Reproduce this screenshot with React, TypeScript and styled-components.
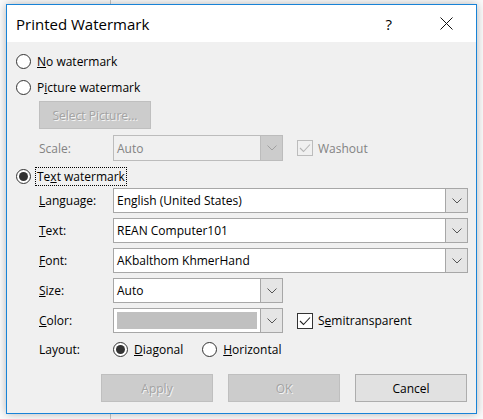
import React from "react";
import styled, { createGlobalStyle } from "styled-components";

const GlobalStyle = createGlobalStyle`
  html, body {
    margin: 0;
    padding: 0;
    background: #fbfbfb;
  }
  body {
    font-family: "Segoe UI", "Open Sans", "Noto Sans", sans-serif;
    font-size: 12px;
    color: #000;
  }
`;

const Desktop = styled.div`
  width: 483px;
  height: 419px;
  overflow: hidden;
  box-sizing: border-box;
  padding: 4px 0 0 6px;
  background:
    linear-gradient(to right, transparent 110px, #c6c6c6 110px, #c6c6c6 111px, transparent 111px),
    #fbfbfb;
`;

const Dialog = styled.div`
  width: 471px;
  height: 410px;
  box-sizing: border-box;
  border: 1px solid #1883d7;
  background: #f0f0f0;
  box-shadow: 0 0 9px rgba(0, 0, 0, 0.28);
  display: flex;
  flex-direction: column;
`;

const TitleBar = styled.div`
  height: 37px;
  flex-shrink: 0;
  background: #fff;
  display: flex;
  align-items: center;
  padding: 0 23px 0 9px;
`;

const Title = styled.div`
  font-size: 15px;
  flex: 1;
`;

const Help = styled.span`
  font-size: 15px;
  margin-right: 48px;
`;

const Body = styled.div`
  display: flex;
  flex-direction: column;
  padding: 9px 8px 0 9px;
`;

const RadioRow = styled.label<{ $top?: number }>`
  display: flex;
  align-items: center;
  height: 20px;
  gap: 6px;
  margin-top: ${(p) => p.$top ?? 0}px;
`;

const Circle = styled.span<{ $on?: boolean }>`
  width: 15px;
  height: 15px;
  box-sizing: border-box;
  border: 1px solid #333;
  border-radius: 50%;
  background: #fff;
  display: flex;
  align-items: center;
  justify-content: center;
  flex-shrink: 0;

  &::after {
    content: "";
    display: ${(p) => (p.$on ? "block" : "none")};
    width: 9px;
    height: 9px;
    border-radius: 50%;
    background: #333;
  }
`;

const Focus = styled.span`
  outline: 1px dotted #000;
  padding: 0 1px;
  margin-left: -1px;
`;

const Indent = styled.div<{ $top?: number }>`
  margin-left: 23px;
  margin-top: ${(p) => p.$top ?? 0}px;
`;

const Button = styled.div<{ $disabled?: boolean; $w?: number }>`
  width: ${(p) => p.$w ?? 112}px;
  height: 28px;
  box-sizing: border-box;
  display: flex;
  align-items: center;
  justify-content: center;
  background: ${(p) => (p.$disabled ? "#cccccc" : "#e1e1e1")};
  border: 1px solid ${(p) => (p.$disabled ? "#bfbfbf" : "#adadad")};
  color: ${(p) => (p.$disabled ? "#a3a3a3" : "#000")};
  text-shadow: ${(p) => (p.$disabled ? "1px 1px 0 #f4f4f4" : "none")};
`;

const ScaleRow = styled.div`
  display: grid;
  grid-template-columns: 74px 170px auto;
  align-items: center;
  height: 26px;
  margin-top: 6px;
  margin-left: 23px;
`;

const Form = styled.div`
  display: grid;
  grid-template-columns: 74px 1fr;
  grid-auto-rows: 25px;
  row-gap: 5px;
  align-items: center;
  margin-left: 23px;
  margin-top: 2px;
`;

const Label = styled.span<{ $disabled?: boolean }>`
  color: ${(p) => (p.$disabled ? "#838383" : "#000")};
`;

const Combo = styled.div<{ $w?: number; $disabled?: boolean }>`
  width: ${(p) => (p.$w ? `${p.$w}px` : "100%")};
  height: 100%;
  box-sizing: border-box;
  border: 1px solid ${(p) => (p.$disabled ? "#bcbcbc" : "#a7a7a7")};
  background: ${(p) => (p.$disabled ? "#f0f0f0" : "#fff")};
  color: ${(p) => (p.$disabled ? "#838383" : "#000")};
  display: flex;
  align-items: stretch;
`;

const ComboValue = styled.div`
  flex: 1;
  display: flex;
  align-items: center;
  padding-left: 3px;
  white-space: nowrap;
  overflow: hidden;
`;

const Swatch = styled.div`
  flex: 1;
  margin: 3px;
  background: #c0c0c0;
`;

const Drop = styled.div<{ $disabled?: boolean }>`
  width: 21px;
  border-left: 1px solid ${(p) => (p.$disabled ? "#bcbcbc" : "#a7a7a7")};
  background: ${(p) => (p.$disabled ? "#cccccc" : "#e5e5e5")};
  display: flex;
  align-items: center;
  justify-content: center;
`;

const CheckRow = styled.div<{ $disabled?: boolean }>`
  display: flex;
  align-items: center;
  gap: 5px;
  margin-left: 14px;
  color: ${(p) => (p.$disabled ? "#838383" : "#000")};
`;

const Box = styled.span<{ $disabled?: boolean }>`
  width: 16px;
  height: 16px;
  box-sizing: border-box;
  border: 1px solid ${(p) => (p.$disabled ? "#bcbcbc" : "#333")};
  background: ${(p) => (p.$disabled ? "#f0f0f0" : "#fff")};
  display: flex;
  align-items: center;
  justify-content: center;
`;

const ColorCell = styled.div`
  display: flex;
  align-items: center;
  height: 100%;
`;

const LayoutRow = styled.div`
  display: grid;
  grid-template-columns: 74px auto auto;
  justify-content: start;
  align-items: center;
  height: 20px;
  margin-top: 6px;
  margin-left: 23px;
`;

const LayoutOption = styled.span<{ $gap?: number }>`
  display: flex;
  align-items: center;
  gap: 6px;
  margin-right: ${(p) => p.$gap ?? 0}px;
`;

const Footer = styled.div`
  display: flex;
  justify-content: flex-end;
  gap: 15px;
  margin: 15px 1px 0 0;
`;

const Chevron = ({ color = "#555" }: { color?: string }) => (
  <svg width="10" height="6" viewBox="0 0 10 6">
    <path d="M0.5 0.5 L5 5 L9.5 0.5" fill="none" stroke={color} strokeWidth="1" />
  </svg>
);

const Tick = ({ color = "#222" }: { color?: string }) => (
  <svg width="12" height="10" viewBox="0 0 12 10">
    <path d="M1 5 L4.5 8.5 L11 1.5" fill="none" stroke={color} strokeWidth="1.1" />
  </svg>
);

const CloseIcon = () => (
  <svg width="13" height="13" viewBox="0 0 13 13">
    <path d="M0.5 0.5 L12.5 12.5 M12.5 0.5 L0.5 12.5" stroke="#111" strokeWidth="1" />
  </svg>
);

const App: React.FC = () => {
  return (
    <Desktop>
      <GlobalStyle />
      <Dialog>
        <TitleBar>
          <Title>Printed Watermark</Title>
          <Help>?</Help>
          <CloseIcon />
        </TitleBar>
        <Body>
          <RadioRow>
            <Circle />
            <span>
              <u>N</u>o watermark
            </span>
          </RadioRow>
          <RadioRow $top={6}>
            <Circle />
            <span>
              P<u>i</u>cture watermark
            </span>
          </RadioRow>
          <Indent $top={4}>
            <Button $disabled>Select Picture...</Button>
          </Indent>
          <ScaleRow>
            <Label $disabled>Scale:</Label>
            <Combo $disabled>
              <ComboValue>Auto</ComboValue>
              <Drop $disabled>
                <Chevron color="#a0a0a0" />
              </Drop>
            </Combo>
            <CheckRow $disabled>
              <Box $disabled>
                <Tick color="#b5b5b5" />
              </Box>
              <span>Washout</span>
            </CheckRow>
          </ScaleRow>
          <RadioRow $top={5}>
            <Circle $on />
            <Focus>
              Te<u>x</u>t watermark
            </Focus>
          </RadioRow>
          <Form>
            <Label>
              <u>L</u>anguage:
            </Label>
            <Combo>
              <ComboValue>English (United States)</ComboValue>
              <Drop>
                <Chevron />
              </Drop>
            </Combo>
            <Label>
              <u>T</u>ext:
            </Label>
            <Combo>
              <ComboValue>REAN Computer101</ComboValue>
              <Drop>
                <Chevron />
              </Drop>
            </Combo>
            <Label>
              <u>F</u>ont:
            </Label>
            <Combo>
              <ComboValue>AKbalthom KhmerHand</ComboValue>
              <Drop>
                <Chevron />
              </Drop>
            </Combo>
            <Label>
              <u>S</u>ize:
            </Label>
            <Combo $w={170}>
              <ComboValue>Auto</ComboValue>
              <Drop>
                <Chevron />
              </Drop>
            </Combo>
            <Label>
              <u>C</u>olor:
            </Label>
            <ColorCell>
              <Combo $w={170}>
                <Swatch />
                <Drop>
                  <Chevron />
                </Drop>
              </Combo>
              <CheckRow>
                <Box>
                  <Tick />
                </Box>
                <span>
                  S<u>e</u>mitransparent
                </span>
              </CheckRow>
            </ColorCell>
          </Form>
          <LayoutRow>
            <Label>Layout:</Label>
            <LayoutOption $gap={19}>
              <Circle $on />
              <span>
                <u>D</u>iagonal
              </span>
            </LayoutOption>
            <LayoutOption>
              <Circle />
              <span>
                <u>H</u>orizontal
              </span>
            </LayoutOption>
          </LayoutRow>
          <Footer>
            <Button $disabled>Apply</Button>
            <Button $disabled>OK</Button>
            <Button>Cancel</Button>
          </Footer>
        </Body>
      </Dialog>
    </Desktop>
  );
};

export default App;
